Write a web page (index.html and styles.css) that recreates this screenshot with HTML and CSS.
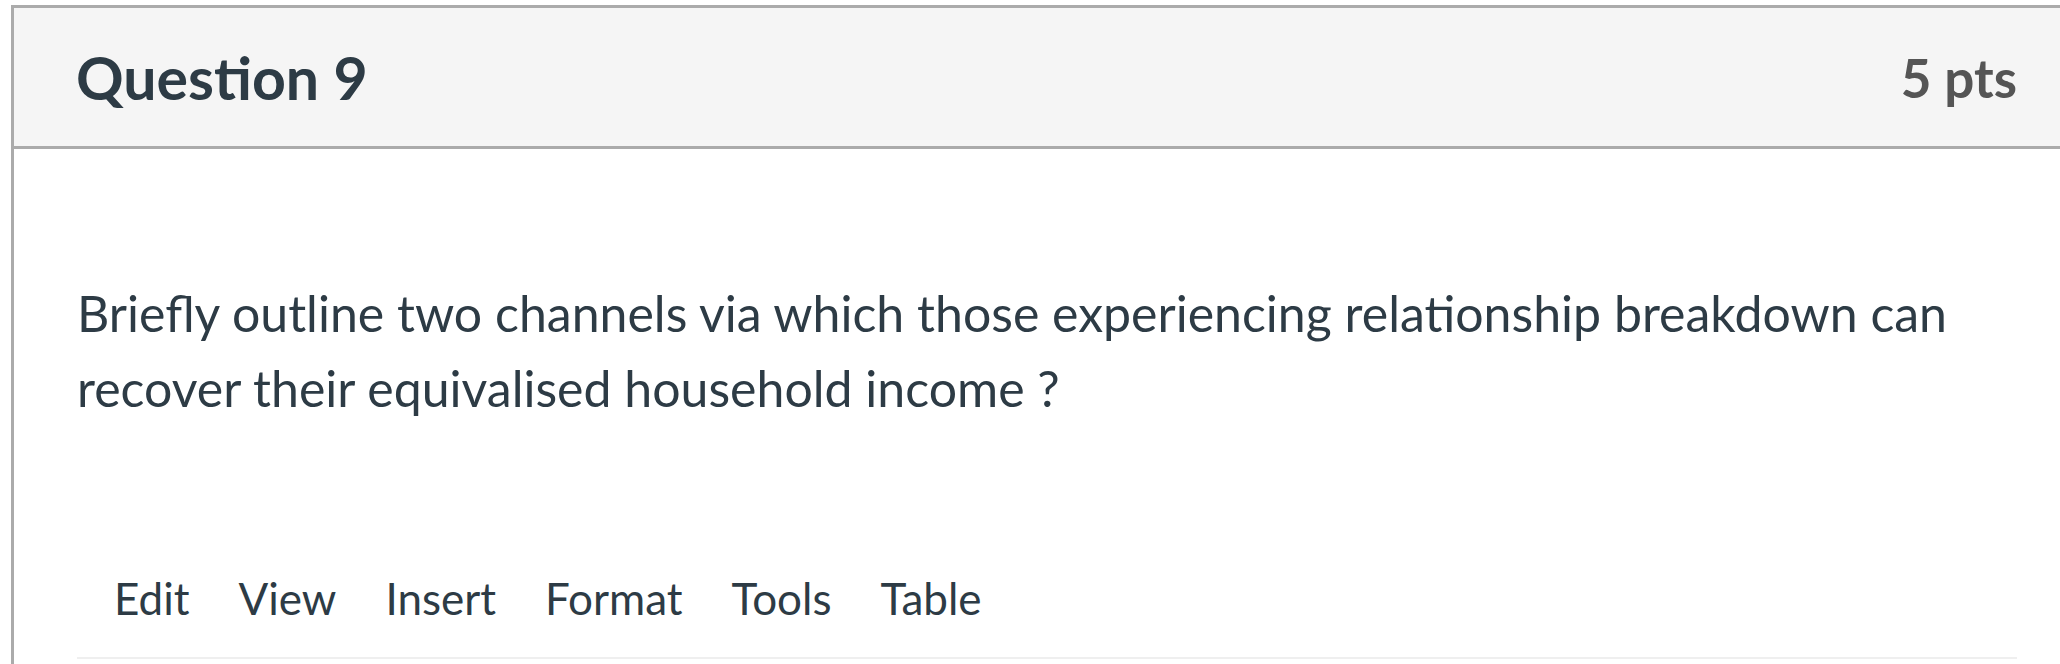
FILE: index.html
```html
<!DOCTYPE html>
<html>
<head>
<meta charset="utf-8">
<link rel="stylesheet" href="styles.css">
</head>
<body>
<div class="question">
  <div class="q-header">
    <h2 class="q-title">Question 9</h2>
    <div class="q-points">5 pts</div>
  </div>
  <div class="q-body">
    <p class="q-text">Briefly outline two channels via which those experiencing relationship breakdown can recover their equivalised household income ?</p>
    <div class="editor">
      <div class="menubar">
        <span class="menu-item">Edit</span>
        <span class="menu-item">View</span>
        <span class="menu-item">Insert</span>
        <span class="menu-item">Format</span>
        <span class="menu-item">Tools</span>
        <span class="menu-item">Table</span>
      </div>
      <div class="edit-area"></div>
    </div>
  </div>
</div>
</body>
</html>
```
FILE: styles.css
```css
html, body {
  margin: 0;
  padding: 0;
  background: #fff;
  overflow: hidden;
}
body {
  font-family: Lato, "Noto Sans", sans-serif;
  color: #2d3b45;
  width: 2060px;
  height: 664px;
}
.question {
  box-sizing: border-box;
  margin: 5px 0 0 11px;
  width: 2106px;
  min-height: 720px;
  border: 3px solid #ababab;
  border-bottom: none;
}
.q-header {
  display: flex;
  align-items: center;
  justify-content: space-between;
  background: #f5f5f5;
  border-bottom: 3px solid #ababab;
  height: 138px;
  padding: 0 97px 0 62px;
}
.q-title {
  margin: 0;
  font-size: 59px;
  font-weight: 700;
  line-height: 1;
}
.q-points {
  font-size: 53px;
  font-weight: 700;
  color: #555;
  line-height: 1;
}
.q-body {
  padding: 0 97px 0 63px;
}
.q-text {
  margin: 0;
  padding-top: 127px;
  font-size: 50px;
  line-height: 75px;
}
.editor {
  margin-top: 147px;
}
.menubar {
  display: flex;
  padding: 0 0 34px 37px;
  gap: 49px;
  font-size: 44px;
  line-height: 50px;
  border-bottom: 2px solid #efefef;
}
.edit-area {
  height: 60px;
}
```
